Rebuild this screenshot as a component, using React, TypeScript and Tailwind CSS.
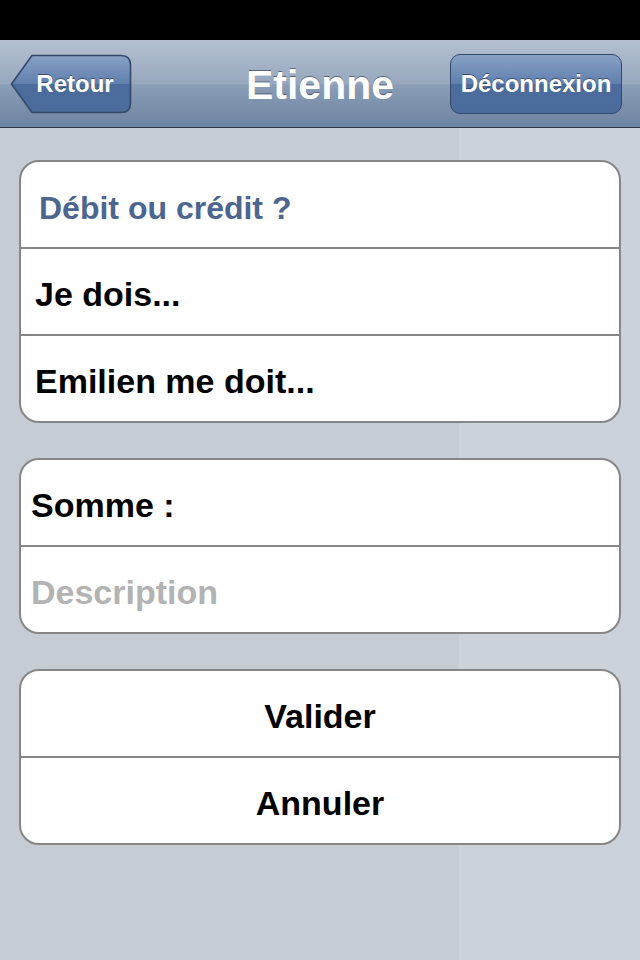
const font = "font-['Liberation_Sans',Arial,Helvetica,sans-serif]";

const BackButton = ({ label }: { label: string }) => {
  return (
    <div className="relative flex h-[60px] w-[122px] items-center justify-center pl-[14px] pr-[6px]">
      <svg className="absolute inset-0" width="122" height="60" viewBox="0 0 122 60">
        <defs>
          <linearGradient id="backFill" x1="0" y1="0" x2="0" y2="1">
            <stop offset="0" stopColor="#89a2c6" />
            <stop offset="0.5" stopColor="#5f7fad" />
            <stop offset="0.5" stopColor="#4b6c9d" />
            <stop offset="1" stopColor="#4a6b9b" />
          </linearGradient>
        </defs>
        <path
          d="M22 1.5 H111 Q120.5 1.5 120.5 11 V49 Q120.5 58.5 111 58.5 H22 L1.5 30 Z"
          fill="url(#backFill)"
          stroke="#354a6a"
          strokeWidth="1.6"
          strokeLinejoin="round"
        />
      </svg>
      <span className="relative text-[24px] font-bold leading-none text-white [text-shadow:0_-1px_0_rgba(0,0,0,0.45)]">
        {label}
      </span>
    </div>
  );
};

const Row = ({
  children,
  className = "",
}: {
  children: React.ReactNode;
  className?: string;
}) => (
  <div className={`flex h-[85px] items-center pt-[6px] ${className}`}>{children}</div>
);

const Divider = () => <div className="h-[2px] bg-[#868686]" />;

const Card = ({ children }: { children: React.ReactNode }) => (
  <div className="mx-[19px] overflow-hidden rounded-[20px] border-2 border-[#868686] bg-white">
    {children}
  </div>
);

const App = () => {
  return (
    <div className={`flex min-h-[960px] w-[640px] flex-col ${font}`}>
      <div className="h-[40px] bg-black" />
      <header className="grid h-[88px] grid-cols-[1fr_auto_1fr] items-center border-b border-[#2e3746] bg-[linear-gradient(to_bottom,#b4c0d1_0%,#97a8be_50%,#8a9db5_52%,#6d84a2_100%)] px-[10px]">
        <div className="flex justify-start pt-[1px]">
          <BackButton label="Retour" />
        </div>
        <h1 className="pt-[3px] text-[41px] font-bold leading-none text-white [text-shadow:0_-1px_0_rgba(40,50,70,0.6)]">
          Etienne
        </h1>
        <div className="flex justify-end pr-[8px] pt-[1px]">
          <div className="flex h-[60px] w-[172px] items-center justify-center rounded-[10px] border-[1.6px] border-[#354a6a] bg-[linear-gradient(to_bottom,#89a2c6_0%,#5f7fad_50%,#4b6c9d_50%,#4a6b9b_100%)]">
            <span className="text-[24px] font-bold leading-none text-white [text-shadow:0_-1px_0_rgba(0,0,0,0.45)]">
              Déconnexion
            </span>
          </div>
        </div>
      </header>

      <main className="flex flex-1 flex-col gap-[35px] bg-[linear-gradient(to_right,#c5ccd4_459px,#cbd2d9_459px)] pt-[32px]">
        <Card>
          <Row className="pl-[18px] text-[32px] font-bold text-[#4c6690]">Débit ou crédit ?</Row>
          <Divider />
          <Row className="pl-[14px] text-[34px] font-bold text-black">Je dois...</Row>
          <Divider />
          <Row className="pl-[14px] text-[34px] font-bold text-black">Emilien me doit...</Row>
        </Card>

        <Card>
          <Row className="pl-[10px] text-[34px] font-bold text-black">Somme :</Row>
          <Divider />
          <Row className="pl-[10px] text-[34px] font-bold text-[#b3b3b3]">Description</Row>
        </Card>

        <Card>
          <Row className="justify-center text-[34px] font-bold text-black">Valider</Row>
          <Divider />
          <Row className="justify-center text-[34px] font-bold text-black">Annuler</Row>
        </Card>
      </main>
    </div>
  );
};

export default App;
